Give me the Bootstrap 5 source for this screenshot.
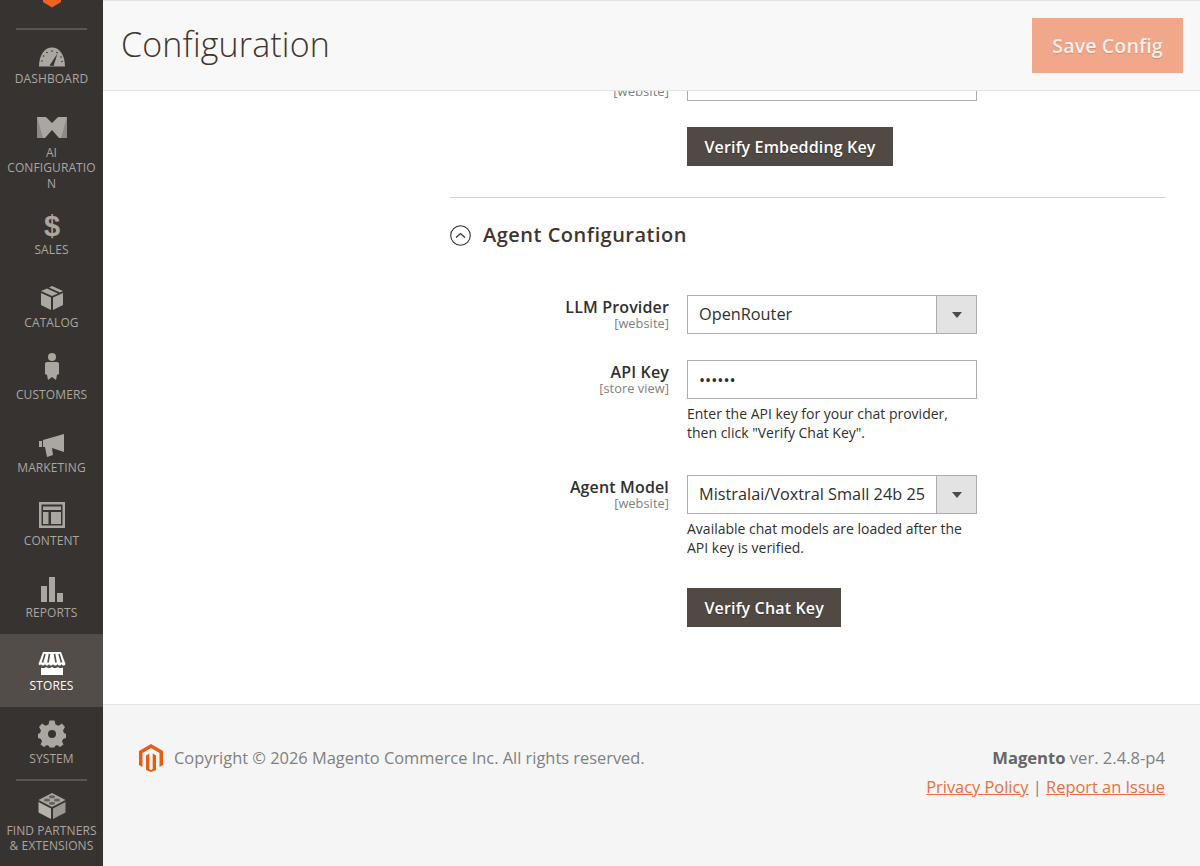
<!DOCTYPE html>
<html lang="en"><head><meta charset="utf-8"><title>Configuration</title>
<link href="https://cdn.jsdelivr.net/npm/bootstrap@5.3.0/dist/css/bootstrap.min.css" rel="stylesheet">
<style>
html,body{height:866px;overflow:hidden}
body{font-family:"Open Sans",sans-serif;color:#303030;font-size:16px;background:#fff}
.admin-shell{height:866px}
.side-nav{width:103px;flex:none;background:#373330;color:#aaa6a0;height:866px;overflow:hidden}
.logo-clip{height:28px;text-align:center;line-height:0}
.side-rule{height:2px;background:#5c5651;margin:0 16px;flex:none}
.side-item{height:72.67px;padding-top:15px;flex:none;text-align:center}
.side-item svg{display:block;margin:0 auto;width:32px;height:28px;overflow:visible}
.side-label{font-size:12px;line-height:15.5px;margin-top:1px;overflow-wrap:anywhere;padding:0 5px;letter-spacing:.1px}
.item-first{height:69.5px;padding-top:12px}
.item-ai{height:98.5px;padding-top:14px}
.item-ai .side-label{margin-top:3px}
.item-active{background:#524d49;color:#fff}
.item-last{padding-top:11px}
.item-last .side-label{padding:0 2px;line-height:15px;margin-top:3px}
.work-area{min-width:0}
.page-head{height:91px;flex:none;background:#f8f8f8;border-top:1px solid #e3e3e3;border-bottom:1px solid #e3e3e3;padding:0 17px 0 18px}
.page-title{font-size:34px;font-weight:300;color:#41362f;margin:0 0 2px;letter-spacing:.15px}
.save-btn{width:151px;height:55px;border-radius:0;border:0;background:#f0a78a;color:#fbeee8;font-size:19.6px;font-weight:600;letter-spacing:.1px;text-shadow:0 1px 1px rgba(0,0,0,.15);padding:0}
.save-btn:hover{background:#f0a78a;color:#fbeee8}
.cfg-wrap{margin-left:347px;margin-right:35px}
.clip-row{height:10px;overflow:hidden}
.clip-row .ctl-col{height:10px;border:1px solid #adadad;border-top:0;background:#fff}
.lbl-col{width:219px;flex:none;text-align:right;padding-right:0}
.ctl-col{width:290px;flex:none;margin-left:18px}
.clip-lbl{font-size:13px;line-height:12px;color:#808080;margin-top:-6px;letter-spacing:.05px}
.dark-btn{background:#514943;border:1px solid #514943;color:#fff;border-radius:0;font-size:16px;font-weight:600;height:39px;padding:1px 16.5px 0;text-shadow:0 1px 1px rgba(0,0,0,.3);letter-spacing:.15px}
.dark-btn:hover{background:#514943;color:#fff;border-color:#514943}
.btn-top{margin-top:26px}
.sec-rule{height:1px;background:#d1d1d1;margin-top:31px}
.sec-head{margin-top:23px;height:28px;color:#41362f}
.sec-head svg{width:21px;height:21px;flex:none;margin-left:0}
.sec-title{font-size:20px;font-weight:600;margin:0 0 0 12px;letter-spacing:.5px;line-height:28px;color:#41362f}
.row-llm{margin-top:46px}
.row-key{margin-top:26px}
.row-model{margin-top:33px}
.fld-name{font-size:16px;font-weight:600;line-height:18px;color:#303030;margin-top:3px;letter-spacing:.15px}
.fld-scope{font-size:12.8px;line-height:14px;color:#808080;margin-top:0;letter-spacing:.05px}
.fld-box{height:39px;border:1px solid #adadad;background:#fff;display:flex}
.fld-box select,.fld-box input{border:0;outline:0;background:#fff;flex:1;min-width:0;appearance:none;-webkit-appearance:none;font-size:16.3px;font-family:"Open Sans",sans-serif;color:#303030;padding:0 0 0 11px;height:100%}
.arrow-box{width:40px;flex:none;background:#e3e3e3;border-left:1px solid #adadad}
.arrow-box svg{width:10px;height:6px}
.fld-help{font-size:14px;line-height:19px;color:#303030;margin-top:5px}
.btn-chat{margin-top:31px}
.foot-bar{height:162px;flex:none;background:#f5f5f5;border-top:1px solid #e3e3e3;margin-top:auto;padding:39px 35px 0 35px}
.foot-logo{width:26px;height:28px;flex:none}
.foot-copy{font-size:16.4px;color:#808080;margin-left:10px;line-height:28px;letter-spacing:0}
.foot-ver{font-size:16.6px;color:#808080;line-height:28px}
.foot-ver b{font-weight:700;color:#666}
.foot-links{font-size:16.4px;line-height:22px;margin-top:4px;color:#808080}
.foot-links a{color:#e8703e}
</style></head>
<body>
<div class="admin-shell d-flex">
<nav class="side-nav d-flex flex-column">
 <div class="logo-clip"><svg width="20" height="8" viewBox="0 1 20 8"><path d="M1 0H19V3L10 8.500 1 3Z" fill="#f26322"/></svg></div>
 <div class="side-rule"></div>
 <div class="side-item item-first">
  <svg viewBox="0 -1 32 28"><path d="M3 23.500C3 12 8.500 4.500 16 4.500S29 12 29 23.500Z" fill="#aaa6a0"/><path d="M13.500 22.500 21.500 10.500l-4 12.500Z" fill="#373330"/><g fill="#373330"><circle cx="16" cy="8" r=".8"/><circle cx="11" cy="9.500" r=".8"/><circle cx="21" cy="9.500" r=".8"/><circle cx="7.500" cy="13" r=".8"/><circle cx="25" cy="14" r=".8"/><circle cx="6" cy="18" r=".8"/><circle cx="26" cy="18.500" r=".8"/></g></svg>
  <div class="side-label">DASHBOARD</div></div>
 <div class="side-item item-ai">
  <svg viewBox="0 0 32 28"><path d="M1 3H10L16 9 22 3H31V24H23L16 16 9 24H1Z" fill="#aaa6a0"/><path d="M1 3 7 24H1ZM31 3 25 24H31Z" fill="#8d8985"/></svg>
  <div class="side-label">AI CONFIGURATION</div></div>
 <div class="side-item">
  <svg viewBox="0 1 32 28"><text x="16" y="24" text-anchor="middle" font-family="Liberation Sans" font-weight="700" font-size="29" fill="#aaa6a0">$</text></svg>
  <div class="side-label">SALES</div></div>
 <div class="side-item">
  <svg viewBox="0 3 32 28"><path d="M15 14.500 5 10V22L15 27Z" fill="#aaa6a0"/><path d="M17 14.500 27 10V22L17 27Z" fill="#aaa6a0"/><path d="M16 3 27 8 24 9.500 13 4.500ZM11 5.500 22 10.500 16 13 5 8Z" fill="#aaa6a0"/></svg>
  <div class="side-label">CATALOG</div></div>
 <div class="side-item">
  <svg viewBox="0 5 32 28"><circle cx="16" cy="4" r="4" fill="#aaa6a0"/><path d="M11 9H21L23 10 23 21 21 22 20 27 16 24 12 27 11 22 9 21 9 10Z" fill="#aaa6a0"/></svg>
  <div class="side-label">CUSTOMERS</div></div>
 <div class="side-item">
  <svg viewBox="0 1 32 28"><path d="M3 11H6V17H3Z" fill="#aaa6a0"/><path d="M7 10 28 4V22L16 18 17 25 11 27 9 17H7Z" fill="#aaa6a0"/></svg>
  <div class="side-label">MARKETING</div></div>
 <div class="side-item">
  <svg viewBox="0 3 32 28"><path fill-rule="evenodd" d="M3 1H29V27H3ZM5.500 3.500V24.500H26.500V3.500Z" fill="#aaa6a0"/><path d="M7 5.500H25V9H7ZM7 11H12.500V23H7ZM15 11H25V23H15Z" fill="#aaa6a0"/></svg>
  <div class="side-label">CONTENT</div></div>
 <div class="side-item">
  <svg viewBox="0 1 32 28"><path d="M5 11H11V27H5ZM13 2H19V27H13ZM21 18H27V27H21Z" fill="#aaa6a0"/></svg>
  <div class="side-label">REPORTS</div></div>
 <div class="side-item item-active">
  <svg viewBox="0 0 32 28"><path d="M7 3H25L29.500 15C28.500 17 26.500 17 25.500 15 24.500 17 22.500 17 21.500 15 20.500 17 18 17 17 15 16 17 14 17 13 15 12 17 10 17 9 15 8 17 6 17 5 15 4 17 3.500 16 2.500 15Z" fill="#fff"/><path d="M9 5 6.500 13.500M13.500 5 12 13.500M18.500 5 20 13.500M23 5 25.500 13.500" stroke="#524d49" stroke-width="1.600"/><path d="M5 18.500C7 19.500 9 19 10 18 12 19.500 14 19.500 16 18 18 19.500 20 19.500 22 18 23 19 25 19.500 27 18.500V26H5Z" fill="#fff"/></svg>
  <div class="side-label">STORES</div></div>
 <div class="side-item">
  <svg viewBox="0 2.500 32 28"><path fill-rule="evenodd" d="M13.500 1H18.500L19.500 5 22.500 6.200 26 4 29 7.500 27 11 28 13.500 30 14.500V18.500L27 19.500 26 22 27.500 25 24 27.500 21 25.500 19 26.500 18.500 28H13.500L13 26.500 11 25.500 8 27.500 4.500 25 6 22 5 19.500 2 18.500V14.500L4 13.500 5 11 3 7.500 6 4 9.500 6.200 12.500 5ZM16 10.500A4 4 0 1 0 16 18.500 4 4 0 1 0 16 10.500Z" fill="#aaa6a0"/></svg>
  <div class="side-label">SYSTEM</div></div>
 <div class="side-rule"></div>
 <div class="side-item item-last">
  <svg viewBox="0 0 32 28"><path d="M16 1 29.500 8 16 15 2.500 8Z" fill="#aaa6a0"/><path d="M2.500 10 15 16.500V27L2.500 20.500Z" fill="#b5b1ab"/><path d="M29.500 10 17 16.500V27L29.500 20.500Z" fill="#9a9691"/><g fill="#373330" opacity=".6"><ellipse cx="11" cy="8" rx="3" ry="1.600"/><ellipse cx="21" cy="8" rx="3" ry="1.600"/><ellipse cx="16" cy="4.700" rx="3" ry="1.500"/><ellipse cx="16" cy="11.300" rx="3" ry="1.500"/></g></svg>
  <div class="side-label">FIND PARTNERS &amp; EXTENSIONS</div></div>
</nav>
<div class="work-area flex-grow-1 d-flex flex-column">
 <header class="page-head d-flex align-items-center justify-content-between">
  <h1 class="page-title">Configuration</h1>
  <button type="button" class="btn save-btn">Save Config</button>
 </header>
 <div class="cfg-wrap">
  <div class="clip-row d-flex"><div class="lbl-col"><div class="clip-lbl">[website]</div></div><div class="ctl-col"></div></div>
  <div class="d-flex btn-top"><div class="lbl-col"></div><div class="ctl-col"><button type="button" class="btn dark-btn">Verify Embedding Key</button></div></div>
  <div class="sec-rule"></div>
  <div class="sec-head d-flex align-items-center">
   <svg viewBox="0 0 21 21"><circle cx="10.500" cy="10.500" r="9.800" fill="none" stroke="#303030" stroke-width="1.100"/><path d="M6 12.500 10.500 8.500 15 12.500" fill="none" stroke="#303030" stroke-width="1.300"/></svg>
   <h2 class="sec-title">Agent Configuration</h2>
  </div>
  <div class="d-flex row-llm"><div class="lbl-col"><div class="fld-name">LLM Provider</div><div class="fld-scope">[website]</div></div>
   <div class="ctl-col"><div class="fld-box"><select aria-label="LLM Provider"><option>OpenRouter</option></select><div class="arrow-box d-flex align-items-center justify-content-center"><svg viewBox="0 0 10 6"><path d="M0 0H10L5 6Z" fill="#514943"/></svg></div></div></div></div>
  <div class="d-flex row-key"><div class="lbl-col"><div class="fld-name">API Key</div><div class="fld-scope">[store view]</div></div>
   <div class="ctl-col"><div class="fld-box"><input type="password" value="123456" aria-label="API Key"></div>
   <div class="fld-help">Enter the API key for your chat provider,<br>then click "Verify Chat Key".</div></div></div>
  <div class="d-flex row-model"><div class="lbl-col"><div class="fld-name">Agent Model</div><div class="fld-scope">[website]</div></div>
   <div class="ctl-col"><div class="fld-box"><select aria-label="Agent Model"><option>Mistralai/Voxtral Small 24b 25</option></select><div class="arrow-box d-flex align-items-center justify-content-center"><svg viewBox="0 0 10 6"><path d="M0 0H10L5 6Z" fill="#514943"/></svg></div></div>
   <div class="fld-help">Available chat models are loaded after the<br>API key is verified.</div>
   <button type="button" class="btn dark-btn btn-chat">Verify Chat Key</button></div></div>
 </div>
 <footer class="foot-bar d-flex justify-content-between align-items-start">
  <div class="d-flex align-items-center">
   <svg class="foot-logo" viewBox="0 0 26 28"><path d="M13 0 25 7V21L21.500 23V9L13 4 4.500 9V23L1 21V7Z" fill="#e85d12"/><path d="M11.300 9.500V25L13 26 14.700 25V9.500L18 11.500V26L13 28 8 26V11.500Z" fill="#e85d12"/></svg>
   <span class="foot-copy">Copyright © 2026 Magento Commerce Inc. All rights reserved.</span>
  </div>
  <div class="text-end">
   <div class="foot-ver"><b>Magento</b> ver. 2.4.8-p4</div>
   <div class="foot-links"><a href="#">Privacy Policy</a> | <a href="#">Report an Issue</a></div>
  </div>
 </footer>
</div>
</div>
<script src="https://cdn.jsdelivr.net/npm/bootstrap@5.3.0/dist/js/bootstrap.bundle.min.js"></script>
</body></html>
